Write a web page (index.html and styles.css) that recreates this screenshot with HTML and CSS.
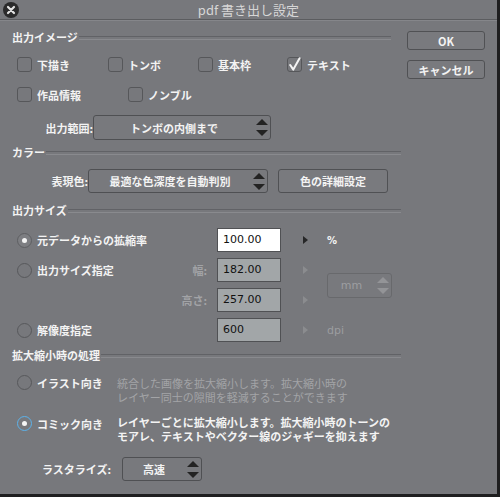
FILE: index.html
```html
<!DOCTYPE html>
<html lang="ja">
<head>
<meta charset="utf-8">
<title>pdf 書き出し設定</title>
<link rel="stylesheet" href="styles.css">
</head>
<body>
<div class="window">
  <div class="titlebar">
    <div class="tb-left">
      <div class="close">
        <svg width="10" height="10" viewBox="0 0 10 10"><path d="M2 2 L8 8 M8 2 L2 8" stroke="#e2e2e2" stroke-width="2.2" stroke-linecap="round"/></svg>
      </div>
    </div>
    <div class="title">pdf 書き出し設定</div>
    <div></div>
  </div>
  <div class="content">
    <div class="main">
      <div class="heading first">出力イメージ</div>
      <div class="checks row1">
        <div class="check w91"><span class="box"></span>下描き</div>
        <div class="check w90"><span class="box"></span>トンボ</div>
        <div class="check w89"><span class="box"></span>基本枠</div>
        <div class="check"><span class="box"><svg class="tick" width="15" height="15" viewBox="0 0 15 15"><path d="M3.2 8 L6.3 12.6 L12.6 1.2" fill="none" stroke="#f4f4f4" stroke-width="2" stroke-linecap="round" stroke-linejoin="round"/></svg></span>テキスト</div>
      </div>
      <div class="checks row2">
        <div class="check w111"><span class="box"></span>作品情報</div>
        <div class="check"><span class="box"></span>ノンブル</div>
      </div>
      <div class="field-row range">
        <div class="field-label lw81">出力範囲:</div>
        <div class="popup pw178">
          <span class="ptext">トンボの内側まで</span>
          <svg class="updown" width="12" height="17" viewBox="0 0 12 17"><polygon points="0,6 6,0 12,6" fill="#232323"/><polygon points="0,11 12,11 6,17" fill="#232323"/></svg>
        </div>
      </div>
      <div class="heading mt5">カラー</div>
      <div class="field-row colors">
        <div class="field-label lw76">表現色:</div>
        <div class="popup pw180 h24">
          <span class="ptext">最適な色深度を自動判別</span>
          <svg class="updown" width="12" height="17" viewBox="0 0 12 17"><polygon points="0,6 6,0 12,6" fill="#232323"/><polygon points="0,11 12,11 6,17" fill="#232323"/></svg>
        </div>
        <div class="btn wide">色の詳細設定</div>
      </div>
      <div class="heading mt10">出力サイズ</div>
      <div class="size-grid">
        <div class="radio-cell"><span class="radio on"></span>元データからの拡縮率</div>
        <div></div>
        <div class="input white">100.00</div>
        <div class="arrow-cell"><span class="tri"></span></div>
        <div class="unit">%</div>

        <div class="radio-cell"><span class="radio"></span>出力サイズ指定</div>
        <div class="dim-label">幅:</div>
        <div class="input">182.00</div>
        <div class="arrow-cell"><span class="tri dim"></span></div>
        <div class="popup disabled mm">
          <span class="ptext">mm</span>
          <svg class="updown" width="12" height="17" viewBox="0 0 12 17"><polygon points="0,6 6,0 12,6" fill="#939497"/><polygon points="0,11 12,11 6,17" fill="#939497"/></svg>
        </div>

        <div></div>
        <div class="dim-label">高さ:</div>
        <div class="input">257.00</div>
        <div class="arrow-cell"><span class="tri dim"></span></div>

        <div class="radio-cell"><span class="radio"></span>解像度指定</div>
        <div></div>
        <div class="input">600</div>
        <div class="arrow-cell"><span class="tri dim"></span></div>
        <div class="unit dim">dpi</div>
      </div>
      <div class="heading mt3">拡大縮小時の処理</div>
      <div class="mode illust">
        <div class="mode-label"><span class="radio"></span>イラスト向き</div>
        <div class="desc dimtext">統合した画像を拡大縮小します。拡大縮小時の<br>レイヤー同士の隙間を軽減することができます</div>
      </div>
      <div class="mode comic">
        <div class="mode-label"><span class="radio blue"></span>コミック向き</div>
        <div class="desc">レイヤーごとに拡大縮小します。拡大縮小時のトーンの<br>モアレ、テキストやベクター線のジャギーを抑えます</div>
      </div>
      <div class="field-row raster">
        <div class="field-label lw99">ラスタライズ:</div>
        <div class="popup pw80 h24">
          <span class="ptext">高速</span>
          <svg class="updown" width="12" height="17" viewBox="0 0 12 17"><polygon points="0,6 6,0 12,6" fill="#232323"/><polygon points="0,11 12,11 6,17" fill="#232323"/></svg>
        </div>
      </div>
    </div>
    <div class="side">
      <div class="btn">OK</div>
      <div class="btn">キャンセル</div>
    </div>
  </div>
</div>
</body>
</html>
```

FILE: styles.css
```css
* { box-sizing: border-box; }
body {
  margin: 0;
  width: 500px;
  height: 497px;
  overflow: hidden;
  background: #1e1e1f;
  font-family: "Noto Sans CJK JP", "Noto Sans", sans-serif;
  font-size: 11px;
  color: #f3f3f3;
}
.window {
  width: 497px;
  height: 494px;
  background: #77787c;
}
.titlebar {
  height: 20px;
  display: grid;
  grid-template-columns: 1fr auto 1fr;
  align-items: center;
  border-bottom: 1px solid #5b5c5f;
  box-shadow: 0 1px 0 #85868a;
}
.tb-left { display: flex; align-items: center; }
.close {
  width: 16px;
  height: 16px;
  margin-left: 3px;
  border-radius: 50%;
  background: #2a2a2b;
  display: flex;
  align-items: center;
  justify-content: center;
}
.title {
  font-size: 13px;
  line-height: 19px;
  color: #d6d6d6;
}
.content { display: flex; }
.main {
  width: 401px;
  padding-left: 12px;
  padding-top: 10px;
  display: flex;
  flex-direction: column;
}
.side {
  margin-left: 6px;
  padding-top: 11px;
  display: flex;
  flex-direction: column;
  gap: 10px;
}
.btn {
  width: 78px;
  height: 19px;
  border: 1px solid #505154;
  border-radius: 3px;
  display: flex;
  align-items: center;
  justify-content: center;
  font-weight: bold;
  background: #797a7e;
}
.btn.wide { width: 110px; height: 24px; margin-left: 10px; }

.heading {
  display: flex;
  align-items: center;
  height: 15px;
  line-height: 15px;
  font-weight: bold;
  white-space: nowrap;
}
.heading::after {
  content: "";
  flex: 1;
  height: 2px;
  margin-left: 1px;
  border-top: 1px solid #616266;
  border-bottom: 1px solid #898a8e;
}
.heading.first { margin-right: 10px; }
.mt5 { margin-top: 5px; }
.mt10 { margin-top: 10px; }
.mt3 { margin-top: 3px; }

.checks {
  display: flex;
  align-items: center;
  height: 15px;
  margin-left: 5px;
}
.checks.row1 { margin-top: 12px; }
.checks.row2 { margin-top: 15px; }
.check {
  display: flex;
  align-items: center;
  gap: 5px;
  font-weight: bold;
  white-space: nowrap;
}
.w91 { width: 91px; }
.w90 { width: 90px; }
.w89 { width: 89px; }
.w111 { width: 111px; }
.box {
  position: relative;
  width: 15px;
  height: 15px;
  flex: none;
  border: 1px solid #56575a;
  border-radius: 3px;
}
.tick { position: absolute; left: -1px; top: -1px; }

.field-row { display: flex; align-items: center; }
.field-row.range { margin-top: 13px; }
.field-row.colors { margin-top: 9px; }
.field-row.raster { margin-top: 14px; }
.field-label {
  text-align: right;
  font-weight: bold;
  white-space: nowrap;
}
.lw81 { width: 81px; }
.lw76 { width: 76px; }
.lw99 { width: 99px; margin-right: 11px; }

.popup {
  height: 25px;
  border: 1px solid #4f5053;
  border-radius: 3px;
  display: flex;
  align-items: center;
  background: #78797d;
}
.popup .ptext {
  flex: 1;
  text-align: center;
  font-weight: bold;
  white-space: nowrap;
}
.popup .updown { flex: none; margin-right: 2px; margin-left: 2px; }
.pw178 { width: 178px; }
.pw180 { width: 180px; }
.pw80 { width: 80px; }
.h24 { height: 24px; }
.popup.disabled { border-color: #68696c; }
.popup.disabled .ptext {
  color: #9d9ea1;
  font-weight: normal;
  font-family: "DejaVu Sans", sans-serif;
  font-size: 11px;
}
.mm {
  grid-column: 5;
  grid-row: 2 / span 2;
  align-self: center;
  width: 65px;
  margin-top: 1px;
}

.size-grid {
  display: grid;
  grid-template-columns: 150px 50px 64px 46px 65px;
  grid-auto-rows: 30px;
  margin-top: 7px;
  margin-left: 5px;
  align-items: center;
}
.radio-cell {
  display: flex;
  align-items: center;
  gap: 5px;
  font-weight: bold;
  white-space: nowrap;
}
.radio {
  position: relative;
  width: 15px;
  height: 15px;
  flex: none;
  border-radius: 50%;
  border: 1px solid #57585b;
}
.radio.on { background: #7d7e82; border-color: #5e5f62; }
.radio.on::after,
.radio.blue::after {
  content: "";
  position: absolute;
  left: 4px;
  top: 4px;
  width: 5px;
  height: 5px;
  border-radius: 50%;
  background: #f5f5f5;
}
.radio.blue { border: 1.5px solid #5cb2ea; }
.radio.blue::after { left: 3.5px; top: 3.5px; }
.dim-label {
  text-align: right;
  padding-right: 10px;
  color: #a2a3a6;
  font-weight: bold;
}
.input {
  height: 24px;
  width: 64px;
  border: 1px solid #505154;
  background: #a2a6a8;
  color: #111;
  font-family: "DejaVu Sans", sans-serif;
  font-size: 11px;
  line-height: 22px;
  padding-left: 5px;
}
.input.white { background: #ffffff; }
.arrow-cell { display: flex; align-items: center; padding-left: 22px; }
.tri {
  width: 0;
  height: 0;
  border-top: 4px solid transparent;
  border-bottom: 4px solid transparent;
  border-left: 5px solid #262627;
}
.tri.dim { border-left-color: #8b8c8f; }
.unit { font-weight: bold; font-family: "DejaVu Sans", sans-serif; font-size: 10px; }
.unit.dim { color: #9c9da0; font-weight: normal; font-size: 11px; }

.mode {
  display: flex;
  align-items: flex-start;
  margin-left: 5px;
}
.mode.illust { margin-top: 12px; }
.mode.comic { margin-top: 11px; }
.mode-label {
  width: 100px;
  display: flex;
  align-items: center;
  gap: 5px;
  font-weight: bold;
  height: 15px;
  white-space: nowrap;
}
.mode.comic .mode-label { margin-top: 1px; }
.desc {
  line-height: 14px;
  font-weight: bold;
  white-space: nowrap;
}
.mode.illust .desc { margin-top: 1px; }
.desc.dimtext { color: #a3a4a7; font-weight: normal; }
```
